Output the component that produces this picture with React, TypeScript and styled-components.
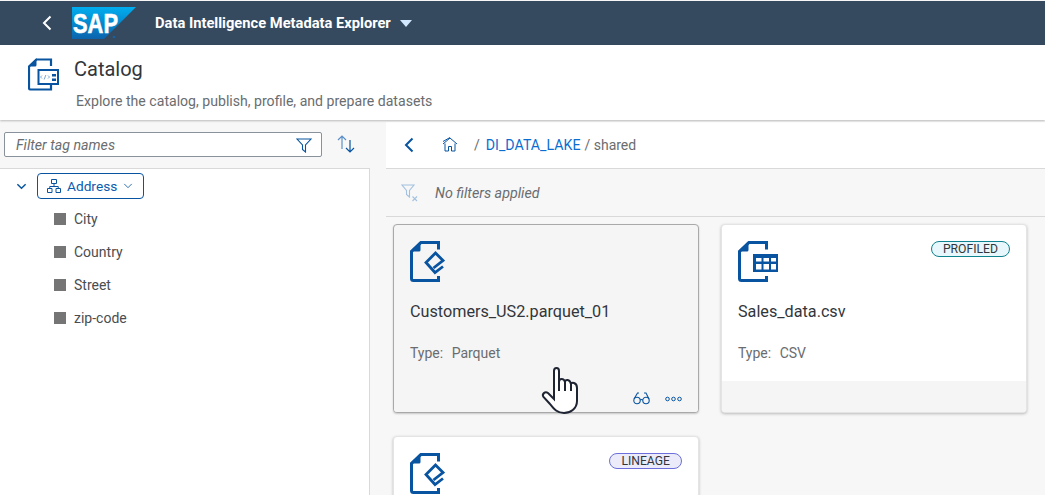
import React from 'react'
import styled, { createGlobalStyle } from 'styled-components'

const Global = createGlobalStyle`
  html, body { margin: 0; padding: 0; background: #f7f7f7; }
  body { font-family: Roboto, "Liberation Sans", sans-serif; color: #32363a; }
  * { box-sizing: border-box; }
`

const Page = styled.div`
  position: relative;
  width: 1045px;
  height: 495px;
  overflow: hidden;
  padding-top: 1px;
  background: #f7f7f7;
`

const ShellBar = styled.div`
  height: 44px;
  background: #354a5f;
  display: flex;
  align-items: center;
  padding-left: 41px;
`
const ShellTitle = styled.div`
  margin-left: 18px;
  font-size: 14.7px;
  font-weight: 700;
  color: #fff;
  white-space: nowrap;
`
const Caret = styled.div`
  margin-left: 9px;
  margin-top: 1px;
  width: 0;
  height: 0;
  border-left: 6px solid transparent;
  border-right: 6px solid transparent;
  border-top: 7px solid #d1e8ff;
`

const Header = styled.div`
  height: 75px;
  background: #fff;
  box-shadow: 0 1px 2px rgba(0, 0, 0, 0.25);
  display: flex;
  padding: 12px 0 0 28px;
  position: relative;
`
const HeaderIcon = styled.div`
  margin-top: 1px;
`
const HeaderText = styled.div`
  margin-left: 15px;
`
const Title = styled.div`
  font-size: 20px;
  line-height: 24px;
  color: #32363a;
`
const Subtitle = styled.div`
  margin: 10px 0 0 2px;
  font-size: 14.1px;
  line-height: 20px;
  color: #6a6d70;
  white-space: nowrap;
`

const Body = styled.div`
  display: grid;
  grid-template-columns: 370px 1fr;
  gap: 16px;
  margin-top: 2px;
`

const LeftPane = styled.div`
  display: flex;
  flex-direction: column;
`
const TagBar = styled.div`
  height: 46px;
  display: flex;
  align-items: flex-start;
  padding: 10px 0 0 4px;
`
const TagInput = styled.div`
  width: 318px;
  height: 25px;
  background: #fff;
  border: 1px solid #89919a;
  border-radius: 2px;
  display: flex;
  align-items: center;
  justify-content: space-between;
  padding: 1px 9px 0 11px;
  font-size: 14.2px;
  font-style: italic;
  color: #6a6d70;
`
const SortButton = styled.div`
  margin: 3px 0 0 15px;
  display: flex;
`
const Tree = styled.div`
  height: 330px;
  background: #fff;
  border-top: 1px solid #d9d9d9;
  border-right: 1px solid #d9d9d9;
  padding: 4px 0 0 16px;
`
const TreeRoot = styled.div`
  display: flex;
  align-items: center;
  gap: 10px;
  height: 26px;
`
const TagChip = styled.div`
  width: 107px;
  height: 26px;
  border: 1px solid #0854a0;
  border-radius: 4px;
  display: flex;
  align-items: center;
  padding-left: 9px;
  gap: 6px;
  font-size: 13.7px;
  color: #0a5cb0;
`
const TreeList = styled.div`
  padding: 3px 0 0 38px;
`
const TreeItem = styled.div`
  height: 33px;
  display: flex;
  align-items: center;
  gap: 8px;
  font-size: 14px;
  color: #4a4d50;
`
const Square = styled.span`
  width: 12px;
  height: 12px;
  background: #757575;
`

const RightPane = styled.div`
  display: flex;
  flex-direction: column;
`
const CrumbBar = styled.div`
  height: 47px;
  background: #fff;
  border-bottom: 1px solid #d9d9d9;
  display: flex;
  align-items: center;
  padding: 0 0 1px 17px;
  font-size: 14px;
  color: #6a6d70;
`
const HomeIcon = styled.svg`
  margin-left: 27px;
  margin-right: 16px;
`
const CrumbLink = styled.span`
  margin: 0 4px 0 6px;
  font-size: 14.2px;
  color: #0a6ed1;
`
const FilterBar = styled.div`
  height: 48px;
  border-bottom: 1px solid #d9d9d9;
  display: flex;
  align-items: center;
  gap: 15px;
  padding-left: 15px;
  font-size: 14.3px;
  font-style: italic;
  color: #6a6d70;
`
const CardGrid = styled.div`
  display: grid;
  grid-template-columns: 306px 306px;
  grid-auto-rows: 189px;
  column-gap: 22px;
  row-gap: 23px;
  padding: 7px 0 0 7px;
`
const Card = styled.div<{ $hover?: boolean }>`
  display: flex;
  flex-direction: column;
  border-radius: 4px;
  overflow: hidden;
  background: ${({ $hover }) => ($hover ? '#f5f5f5' : '#fff')};
  border: 1px solid ${({ $hover }) => ($hover ? '#a9a9a9' : '#e4e4e4')};
  box-shadow: ${({ $hover }) =>
    $hover ? '0 1px 2px rgba(0,0,0,.2)' : '0 1px 3px rgba(0,0,0,.25)'};
`
const CardMain = styled.div`
  flex: 1;
  padding: 16px 16px 0 16px;
`
const CardTop = styled.div`
  display: flex;
  justify-content: space-between;
  align-items: flex-start;
  height: 41px;
`
const CardName = styled.div`
  margin-top: 20px;
  font-size: 16.2px;
  line-height: 20px;
  color: #32363a;
`
const CardType = styled.div`
  margin-top: 21px;
  font-size: 14px;
  line-height: 20px;
  color: #6a6d70;
  word-spacing: 5px;
`
const CardFooter = styled.div`
  height: 31px;
  flex: none;
  background: #f5f5f5;
  display: flex;
  align-items: center;
  justify-content: flex-end;
  gap: 15px;
  padding: 4px 16px 0 0;
`
const Badge = styled.div<{ $border: string; $bg: string }>`
  height: 16px;
  padding: 0 11px;
  border-radius: 8px;
  border: 1px solid ${({ $border }) => $border};
  background: ${({ $bg }) => $bg};
  font-size: 12.2px;
  line-height: 14px;
  color: #32363a;
`
const HandCursor = styled.svg`
  position: absolute;
  left: 540px;
  top: 365px;
`

const BackIcon = ({ color, w = 2 }: { color: string; w?: number }) => (
  <svg width="12" height="16" viewBox="0 0 12 16">
    <path d="M9.5 1.5L3 8l6.5 6.5" fill="none" stroke={color} strokeWidth={w} />
  </svg>
)

const SapLogo = () => (
  <svg width="65" height="33" viewBox="0 0 65 33" style={{ marginLeft: 19 }}>
    <defs>
      <linearGradient id="sapg" x1="0" y1="0" x2="0" y2="1">
        <stop offset="0" stopColor="#00aeef" />
        <stop offset="1" stopColor="#0a63ad" />
      </linearGradient>
    </defs>
    <path d="M0 0H64L32 32H0Z" fill="url(#sapg)" />
    <text x="1" y="26" fontFamily="Liberation Sans, sans-serif" fontSize="28" fontWeight="700" fill="#fff" stroke="#fff" strokeWidth="0.6" textLength="45" lengthAdjust="spacingAndGlyphs">SAP</text>
    <circle cx="42" cy="30" r="1.3" fill="#1a5f9e" />
  </svg>
)

const DocOutline = () => (
  <>
    <path d="M28.5 8.5V1.5H11L1.5 10.5V37.5a2 2 0 0 0 2 2H28.5V35" fill="none" stroke="#0854a0" strokeWidth="3" />
    <path d="M0 10.5L10.5 0V9a1.5 1.5 0 0 1-1.5 1.5Z" fill="#0854a0" />
  </>
)

const ParquetDoc = () => (
  <svg width="35" height="41" viewBox="0 0 35 41">
    <DocOutline />
    <path d="M33 25.500L25 31.500L16 21.500L25.500 12L33 19.500L23.500 27" fill="none" stroke="#0854a0" strokeWidth="2.800" />
  </svg>
)

const TableDoc = () => (
  <svg width="41" height="41" viewBox="0 0 41 41">
    <DocOutline />
    <rect x="15" y="13" width="25" height="18" fill="#fff" />
    <path d="M15 13H40V31H15Z" fill="#0854a0" />
    <path d="M18 17h5.500v3.500H18zM25.500 17h5.500v3.500h-5.500zM33 17h5v3.500h-5zM18 23h5.500v5.500H18zM25.500 23h5.500v5.500h-5.500zM33 23h5v5.500h-5z" fill="#fff" />
  </svg>
)

const CatalogDoc = () => (
  <svg width="31" height="33" viewBox="0 0 31 33">
    <path d="M23 8V1.500H8.500L1 8.500V30a1.500 1.500 0 0 0 1.500 1.500H23V27" fill="none" stroke="#0854a0" strokeWidth="2.200" />
    <path d="M0 8.500L8.500 0V7a1.500 1.500 0 0 1-1.500 1.500Z" fill="#0854a0" />
    <rect x="10.500" y="12" width="19.500" height="14" fill="#fff" stroke="#0854a0" strokeWidth="2" />
    <path d="M14 17.500l-1.500 1.500 1.500 1.500M20 17.500l1.500 1.500-1.500 1.500M17.800 17l-1.600 4.500" fill="none" stroke="#5b8fc7" strokeWidth="0.800" />
    <path d="M24 16h4v2.500h-4zM24 20.500h4v2.500h-4z" fill="#0854a0" />
  </svg>
)

const FunnelIcon = () => (
  <svg width="16" height="15" viewBox="0 0 16 15">
    <path d="M1 1H15L9.500 7V14L6.500 11.500V7Z" fill="none" stroke="#0854a0" strokeWidth="1.100" />
  </svg>
)

const SortIcon = () => (
  <svg width="18" height="18" viewBox="0 0 18 18">
    <path d="M1 5L5 1L9 5M5 1V14" fill="none" stroke="#5b8fc7" strokeWidth="1.200" />
    <path d="M9 13L13 17L17 13M13 17V5" fill="none" stroke="#0854a0" strokeWidth="1.200" />
  </svg>
)

const HierarchyIcon = () => (
  <svg width="14" height="14" viewBox="0 0 14 14">
    <path d="M4.500 .5h5v4h-5zM.5 9.500h4.500v4H.5zM9 9.500h4.500v4H9zM7 4.500v3M2.750 9.500v-2h8.500v2" fill="none" stroke="#0854a0" strokeWidth="1" />
  </svg>
)

const ChevronDown = ({ size, w, color }: { size: number; w: number; color: string }) => (
  <svg width={size} height={size} viewBox="0 0 12 12">
    <path d="M1.500 3.500L6 8l4.500-4.500" fill="none" stroke={color} strokeWidth={w} />
  </svg>
)

const NoFilterIcon = () => (
  <svg width="19" height="18" viewBox="0 0 19 18">
    <path d="M1 1H13L8.500 6.500V13L5.500 10.500V6.500Z" fill="none" stroke="#a4c2e0" strokeWidth="1.100" />
    <path d="M11.500 12.500l4.500 4.500M16 12.500l-4.500 4.500" stroke="#a4c2e0" strokeWidth="1.100" />
  </svg>
)

const GlassesIcon = () => (
  <svg width="17" height="13" viewBox="0 0 17 13">
    <circle cx="4" cy="8.500" r="3.200" fill="none" stroke="#0854a0" strokeWidth="1.100" />
    <circle cx="13" cy="8.500" r="3.200" fill="none" stroke="#0854a0" strokeWidth="1.100" />
    <path d="M7.200 8c.8-.6 1.800-.6 2.600 0M1 7L4.500 1H6M16 7L13 1H11" fill="none" stroke="#0854a0" strokeWidth="1.100" />
  </svg>
)

const DotsIcon = () => (
  <svg width="17" height="6" viewBox="0 0 17 6">
    <circle cx="2.500" cy="3" r="1.800" fill="none" stroke="#0854a0" />
    <circle cx="8.500" cy="3" r="1.800" fill="none" stroke="#0854a0" />
    <circle cx="14.500" cy="3" r="1.800" fill="none" stroke="#0854a0" />
  </svg>
)

const tags = ['City', 'Country', 'Street', 'zip-code']

export default function App() {
  return (
    <Page>
      <Global />
      <ShellBar>
        <BackIcon color="#fff" />
        <SapLogo />
        <ShellTitle>Data Intelligence Metadata Explorer</ShellTitle>
        <Caret />
      </ShellBar>
      <Header>
        <HeaderIcon><CatalogDoc /></HeaderIcon>
        <HeaderText>
          <Title>Catalog</Title>
          <Subtitle>Explore the catalog, publish, profile, and prepare datasets</Subtitle>
        </HeaderText>
      </Header>
      <Body>
        <LeftPane>
          <TagBar>
            <TagInput>
              Filter tag names
              <FunnelIcon />
            </TagInput>
            <SortButton><SortIcon /></SortButton>
          </TagBar>
          <Tree>
            <TreeRoot>
              <ChevronDown size={11} w={1.600} color="#0854a0" />
              <TagChip>
                <HierarchyIcon />
                Address
                <ChevronDown size={10} w={1} color="#0854a0" />
              </TagChip>
            </TreeRoot>
            <TreeList>
              {tags.map((t) => (
                <TreeItem key={t}><Square />{t}</TreeItem>
              ))}
            </TreeList>
          </Tree>
        </LeftPane>
        <RightPane>
          <CrumbBar>
            <BackIcon color="#0854a0" />
            <HomeIcon width="16" height="15" viewBox="0 0 16 15">
              <path d="M1 7L8 1l7 6M3 6.500V14h3.500V9.500h3V14H13V6.500M1 4.500L8 .5" fill="none" stroke="#0854a0" strokeWidth="1" />
            </HomeIcon>
            /
            <CrumbLink>DI_DATA_LAKE</CrumbLink>
            / shared
          </CrumbBar>
          <FilterBar>
            <NoFilterIcon />
            No filters applied
          </FilterBar>
          <CardGrid>
            <Card $hover>
              <CardMain>
                <CardTop><ParquetDoc /></CardTop>
                <CardName>Customers_US2.parquet_01</CardName>
                <CardType>Type: Parquet</CardType>
              </CardMain>
              <CardFooter>
                <GlassesIcon />
                <DotsIcon />
              </CardFooter>
            </Card>
            <Card>
              <CardMain>
                <CardTop>
                  <TableDoc />
                  <Badge $border="#0f828f" $bg="#e8f7fb">PROFILED</Badge>
                </CardTop>
                <CardName>Sales_data.csv</CardName>
                <CardType>Type: CSV</CardType>
              </CardMain>
              <CardFooter />
            </Card>
            <Card>
              <CardMain>
                <CardTop>
                  <ParquetDoc />
                  <Badge $border="#6c6fdc" $bg="#ebebfa">LINEAGE</Badge>
                </CardTop>
              </CardMain>
            </Card>
          </CardGrid>
        </RightPane>
      </Body>
      <HandCursor width="40" height="52" viewBox="0 0 40 52">
        <path d="M14 6C14 2 19 2 19 6V17C19 13 24 13 25 17C25 14 30 14 31 19C31 17 37 17 37 23V36C37 44 30 48 24 48C17 48 14 44 10 39L3.500 32C1.500 29 5 26 8 28L14 34Z" fill="#fff" stroke="#1f2433" strokeWidth="2" />
        <path d="M19 17V26M25 17V26M31 19V26" fill="none" stroke="#1f2433" strokeWidth="2" />
      </HandCursor>
    </Page>
  )
}
